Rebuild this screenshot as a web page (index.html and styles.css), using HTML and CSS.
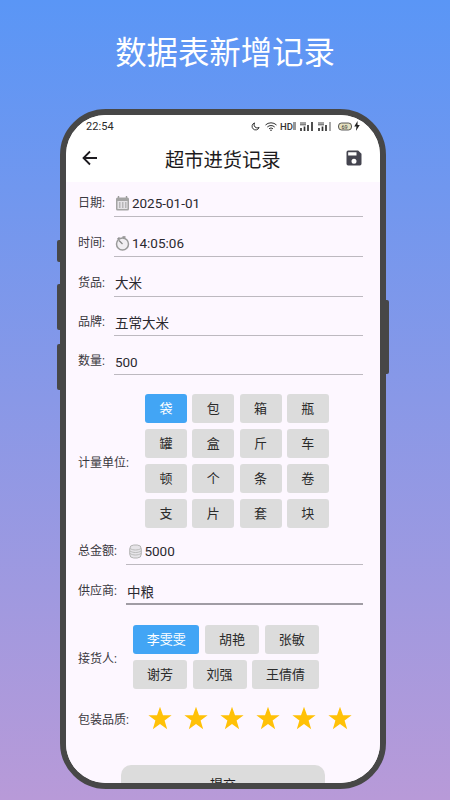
FILE: index.html
```html
<!DOCTYPE html>
<html lang="zh">
<head>
<meta charset="utf-8">
<title>超市进货记录</title>
<link rel="stylesheet" href="styles.css">
</head>
<body>
<h1 class="headline">数据表新增记录</h1>
<div class="phone">
  <span class="side side-a"></span><span class="side side-b"></span><span class="side side-c"></span><span class="side side-r"></span>
  <div class="screen">
    <div class="statusbar">
      <span class="clock">22:54</span>
      <span class="status-icons">
        <svg class="moon" width="9" height="9" viewBox="0 0 10 10"><path d="M4 1a4 4 0 1 0 5 5 3.600 3.600 0 0 1-5-5z" fill="none" stroke="#333" stroke-width="1.100"/></svg>
        <svg width="12" height="9" viewBox="0 0 12 9"><path d="M.5 3a8 8 0 0 1 11 0M2.300 5a5.400 5.400 0 0 1 7.400 0M4 6.800a3 3 0 0 1 4 0" fill="none" stroke="#333" stroke-width="1"/><circle cx="6" cy="8.200" r=".8" fill="#333"/></svg>
        <span class="hd">HD</span>
        <svg width="3" height="9" viewBox="0 0 3 9"><path d="M0 1h3M0 3h3M0 5h3M0 7h3" stroke="#333" stroke-width="1.200"/></svg>
        <svg class="sig" width="14" height="9" viewBox="0 0 14 9"><path d="M1 9V6M4.500 9V4.500M8 9V3M12 9V0" stroke="#333" stroke-width="1.700"/><path d="M0 2.800h6M0 1h6" stroke="#333" stroke-width=".9"/></svg>
        <svg class="sig" width="14" height="9" viewBox="0 0 14 9"><path d="M1 9V6M4.500 9V4.500M8 9V3" stroke="#333" stroke-width="1.700"/><path d="M12 9V0" stroke="#999" stroke-width="1.700"/><path d="M0 2.800h6M0 1h6" stroke="#333" stroke-width=".9"/></svg>
        <svg class="batt" width="15" height="9" viewBox="0 0 15 9"><rect x=".5" y="1" width="13" height="7" rx="3" fill="#e4e0c0" stroke="#333" stroke-width=".8"/><text x="3.500" y="6.800" font-size="5.500" font-family="Roboto" fill="#333">69</text></svg>
        <svg width="6" height="10" viewBox="0 0 5 9"><path d="M3 0 0 5h2L1.500 9 5 3.500H3z" fill="#222"/></svg>
      </span>
    </div>
    <header class="appbar">
      <svg class="back" width="18" height="18" viewBox="0 0 18 18"><path d="M16 9H2.500M9 2.500 2.500 9 9 15.500" fill="none" stroke="#1d1b20" stroke-width="1.800"/></svg>
      <span class="title">超市进货记录</span>
      <svg class="save" width="20" height="20" viewBox="0 0 24 24"><path d="M17 3H5a2 2 0 0 0-2 2v14a2 2 0 0 0 2 2h14a2 2 0 0 0 2-2V7l-4-4zm-5 16a3 3 0 1 1 0-6 3 3 0 0 1 0 6zm3-10H5V5h10v4z" fill="#44444f"/></svg>
    </header>
    <main class="form">
      <div class="row r-date">
        <label>日期:</label>
        <div class="field">
          <svg class="ficon" width="15" height="15" viewBox="0 0 15 15"><path d="M3.500 0v2M11.500 0v2" stroke="#9a9a9a" stroke-width="1.400"/><rect x="1" y="1.500" width="13" height="13" rx="1.500" fill="#a4a4a4"/><rect x="2.500" y="5" width="10" height="8" fill="#e4e2e6"/><path d="M4 7h1.500M7 7h1.500M10 7h1.500M4 9h1.500M7 9h1.500M10 9h1.500M4 11h1.500M7 11h1.500M10 11h1.500" stroke="#8a8a8a" stroke-width="1"/></svg>
          <span>2025-01-01</span>
        </div>
      </div>
      <div class="row">
        <label>时间:</label>
        <div class="field">
          <svg class="ficon" width="15" height="15" viewBox="0 0 15 15"><circle cx="7.500" cy="8" r="6" fill="#f1eef2" stroke="#9a9a9a" stroke-width="1.500"/><path d="M7.500 8 4 4.500M2.500 3 4.500 1.500M7.500 1h3" stroke="#8a8a8a" stroke-width="1.300" fill="none"/></svg>
          <span>14:05:06</span>
        </div>
      </div>
      <div class="row"><label>货品:</label><div class="field plain"><span>大米</span></div></div>
      <div class="row tight"><label>品牌:</label><div class="field plain"><span>五常大米</span></div></div>
      <div class="row tight"><label>数量:</label><div class="field plain"><span>500</span></div></div>

      <div class="choice units">
        <label>计量单位:</label>
        <div class="unit-grid">
          <button class="chip on">袋</button><button class="chip">包</button><button class="chip">箱</button><button class="chip">瓶</button>
          <button class="chip">罐</button><button class="chip">盒</button><button class="chip">斤</button><button class="chip">车</button>
          <button class="chip">顿</button><button class="chip">个</button><button class="chip">条</button><button class="chip">卷</button>
          <button class="chip">支</button><button class="chip">片</button><button class="chip">套</button><button class="chip">块</button>
        </div>
      </div>

      <div class="row r-money">
        <label>总金额:</label>
        <div class="field">
          <svg class="ficon coin" width="13" height="15" viewBox="0 0 13 15"><rect x=".7" y="1" width="11.600" height="13" rx="4" fill="#e6e4e8" stroke="#b4b4b4" stroke-width="1"/><path d="M1 4.500c3 2 8 2 11 0M1 7c3 2 8 2 11 0M1 9.500c3 2 8 2 11 0" fill="none" stroke="#b4b4b4" stroke-width=".9"/></svg>
          <span>5000</span>
        </div>
      </div>
      <div class="row"><label>供应商:</label><div class="field plain focus"><span>中粮</span></div></div>

      <div class="choice people">
        <label>接货人:</label>
        <div class="people-list">
          <div class="people-row"><button class="chip wide on w66">李雯雯</button><button class="chip wide">胡艳</button><button class="chip wide">张敏</button></div>
          <div class="people-row"><button class="chip wide">谢芳</button><button class="chip wide">刘强</button><button class="chip wide w66">王倩倩</button></div>
        </div>
      </div>

      <div class="quality">
        <label>包装品质:</label>
        <div class="stars">
          <svg width="24" height="24" viewBox="0 0 24 24"><path d="M12 .8l3 8.400h8.600l-7 5.300 2.600 8.700L12 18l-7.200 5.200 2.600-8.700-7-5.300H9z" fill="#ffc107"/></svg>
          <svg width="24" height="24" viewBox="0 0 24 24"><path d="M12 .8l3 8.400h8.600l-7 5.300 2.600 8.700L12 18l-7.200 5.200 2.600-8.700-7-5.300H9z" fill="#ffc107"/></svg>
          <svg width="24" height="24" viewBox="0 0 24 24"><path d="M12 .8l3 8.400h8.600l-7 5.300 2.600 8.700L12 18l-7.200 5.200 2.600-8.700-7-5.300H9z" fill="#ffc107"/></svg>
          <svg width="24" height="24" viewBox="0 0 24 24"><path d="M12 .8l3 8.400h8.600l-7 5.300 2.600 8.700L12 18l-7.200 5.200 2.600-8.700-7-5.300H9z" fill="#ffc107"/></svg>
          <svg width="24" height="24" viewBox="0 0 24 24"><path d="M12 .8l3 8.400h8.600l-7 5.300 2.600 8.700L12 18l-7.200 5.200 2.600-8.700-7-5.300H9z" fill="#ffc107"/></svg>
          <svg width="24" height="24" viewBox="0 0 24 24"><path d="M12 .8l3 8.400h8.600l-7 5.300 2.600 8.700L12 18l-7.200 5.200 2.600-8.700-7-5.300H9z" fill="#ffc107"/></svg>
        </div>
      </div>

      <button class="submit">提交</button>
    </main>
  </div>
</div>
</body>
</html>
```
FILE: styles.css
```css
* { box-sizing: border-box; }
html, body { margin: 0; height: 800px; }
body {
  width: 450px;
  overflow: hidden;
  background: linear-gradient(180deg, #5a96f6 0%, #b89ad8 100%);
  font-family: Roboto, "Noto Sans CJK SC", sans-serif;
  color: #2b2930;
  display: flex;
  flex-direction: column;
  align-items: center;
}
.headline {
  margin: 0;
  padding-top: 36px;
  height: 109px;
  font-size: 31.400px;
  line-height: 36px;
  font-weight: 400;
  color: #fff;
}
.phone {
  position: relative;
  width: 325.500px;
  height: 680px;
  margin-right: 4.500px;
  border: 6px solid #474747;
  border-radius: 46px;
  background: #fff;
}
.side { position: absolute; background: #474747; width: 3px; }
.side-a { left: -9px; top: 125px; height: 22px; border-radius: 2px 0 0 2px; }
.side-b { left: -9px; top: 169px; height: 46px; border-radius: 2px 0 0 2px; }
.side-c { left: -9px; top: 229px; height: 46px; border-radius: 2px 0 0 2px; }
.side-r { right: -9px; top: 185px; height: 74px; border-radius: 0 2px 2px 0; }
.screen {
  height: 100%;
  border-radius: 40px;
  overflow: hidden;
  display: flex;
  flex-direction: column;
}
.statusbar {
  height: 20px;
  padding: 2px 19.500px 0 20px;
  display: flex;
  justify-content: space-between;
  align-items: center;
  background: #fff;
  flex: none;
}
.clock { font-size: 11px; color: #2a2a2a; letter-spacing: .1px; }
.status-icons { display: flex; align-items: center; gap: 3px; }
.status-icons svg { display: block; }
.status-icons .moon { margin-right: 2px; }
.status-icons .sig { margin-left: 1px; }
.status-icons .batt { margin-left: 3px; margin-right: -2px; }
.hd { font-size: 9.500px; font-weight: 500; margin-right: -3px; color: #333; }
.appbar {
  height: 47px;
  flex: none;
  background: #fff;
  display: flex;
  align-items: center;
  justify-content: space-between;
  padding: 0 16px 1px 15px;
}
.title { font-size: 19.300px; color: #1d1b20; margin: 1px 0 0 3px; }
.back, .save { display: block; flex: none; }
.form {
  flex: 1;
  background: #fdf7ff;
  padding: 0 17px 0 12px;
  display: flex;
  flex-direction: column;
}
.row {
  display: flex;
  align-items: stretch;
  gap: 9px;
  height: 40px;
}
.row.tight { height: 39px; }
.row.r-date { height: 35px; }
.row.r-money { height: 37px; }
.row label {
  font-size: 12px;
  line-height: 18px;
  padding-bottom: 5px;
  color: #3a3840;
  white-space: nowrap;
  align-self: flex-end;
}
.field {
  flex: 1;
  min-width: 0;
  display: flex;
  align-items: flex-end;
  gap: 1.500px;
  border-bottom: 1.500px solid #bdb9c0;
  padding-bottom: 3px;
  font-size: 13.500px;
  line-height: 20px;
  color: #2b2930;
}
.field.plain { padding-left: 1px; }
.row.tight .field { padding-bottom: 2px; }
.field.focus { border-bottom: 2px solid #a09ca4; padding-bottom: 1px; }
.ficon { display: block; margin: 0 0 2px 1.500px; flex: none; }
.coin { margin-left: 3px; margin-right: 1px; }
.choice { display: flex; align-items: center; }
.choice label, .quality label {
  font-size: 12px;
  color: #3a3840;
  white-space: nowrap;
}
.units { margin-top: 19px; height: 134px; gap: 16px; }
.unit-grid {
  display: grid;
  grid-template-columns: repeat(4, 42px);
  grid-auto-rows: 29px;
  column-gap: 5.300px;
  row-gap: 6px;
}
.chip {
  border: 0;
  border-radius: 3px;
  background: #dcdcdc;
  color: #2b2b2b;
  font: 13px/29px Roboto, "Noto Sans CJK SC", sans-serif;
  padding: 0;
  height: 29px;
}
.chip.on { background: #42a5f5; color: #fff; }
.people { margin-top: 20px; height: 64px; gap: 16px; }
.people-list { display: flex; flex-direction: column; gap: 6px; }
.people-row { display: flex; gap: 5.700px; }
.chip.wide { width: 54px; }
.chip.w66 { width: 66.500px; }
.quality {
  margin-top: 17px;
  height: 24px;
  display: flex;
  align-items: center;
  gap: 19px;
}
.stars { display: flex; gap: 12px; }
.stars svg { display: block; }
.submit {
  margin: 35px 0 0 43px;
  width: 204px;
  height: 40px;
  flex: none;
  border: 0;
  border-radius: 10px;
  background: #dcdcdc;
  color: #1d1b20;
  font: 13px/36px Roboto, "Noto Sans CJK SC", sans-serif;
  padding: 0;
}
```
